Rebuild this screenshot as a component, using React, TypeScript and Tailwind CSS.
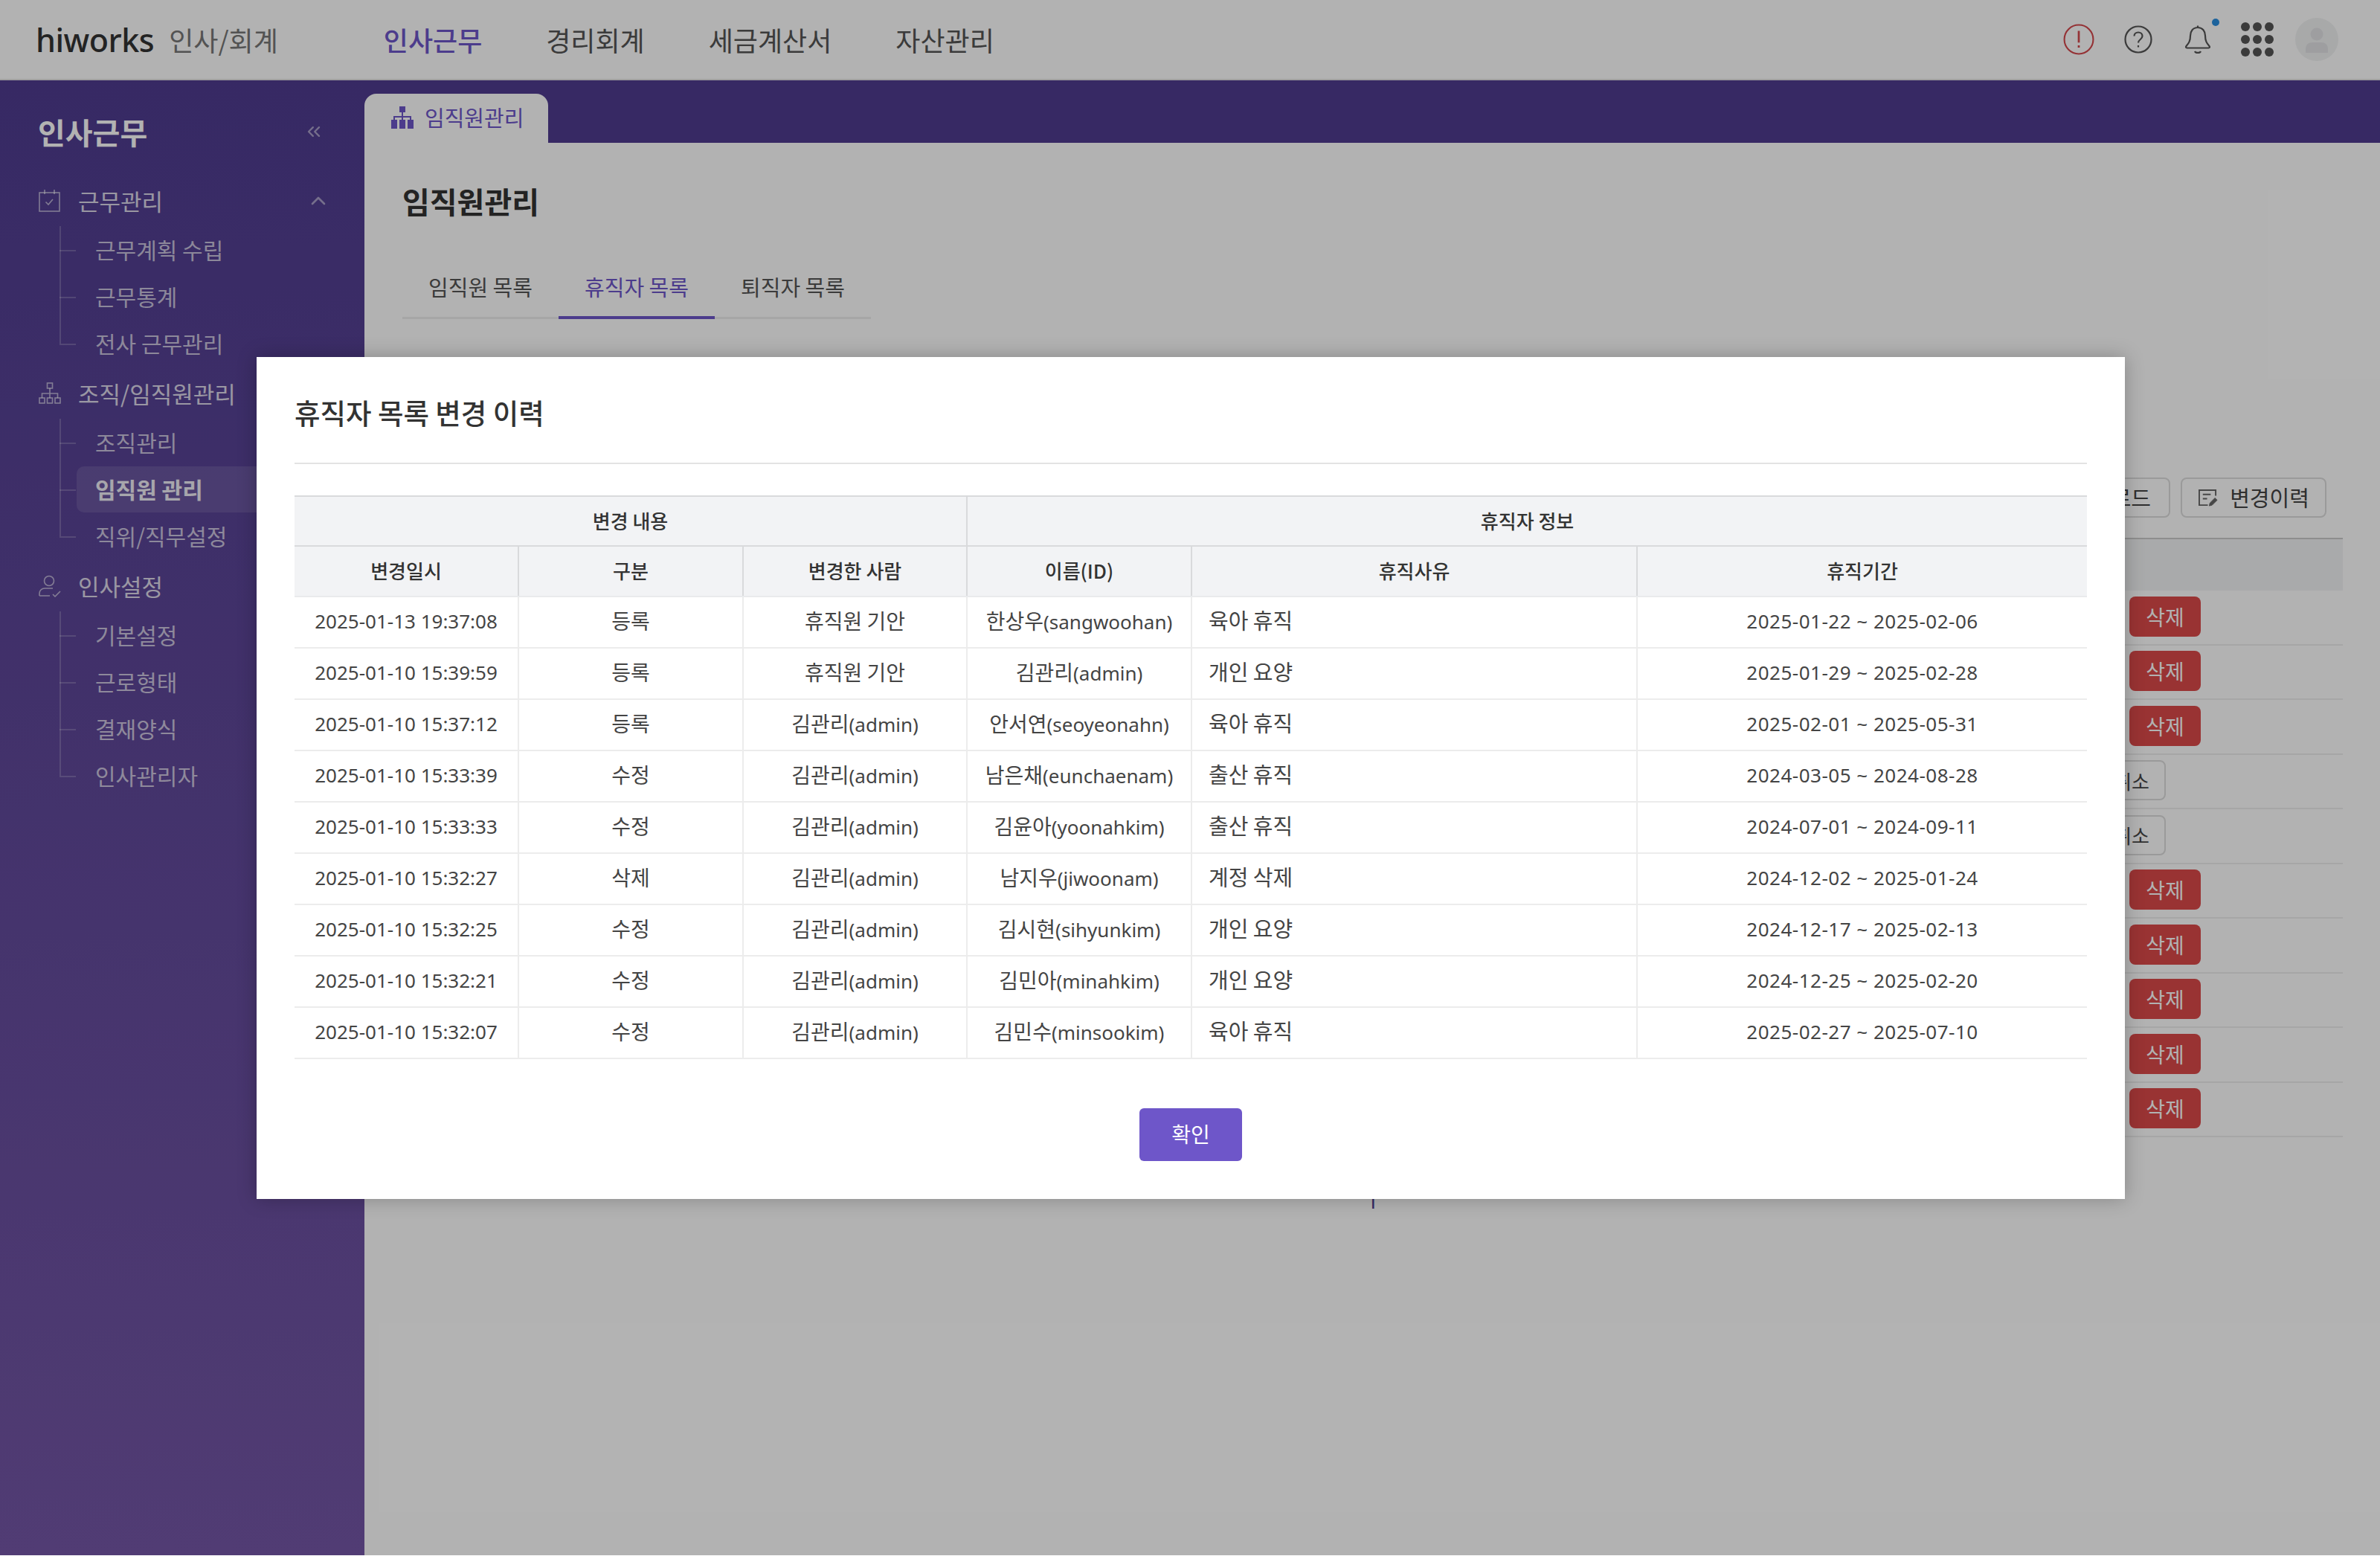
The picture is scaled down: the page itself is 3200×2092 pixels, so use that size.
import { ChevronUp, ChevronsLeft } from "lucide-react";

const kr = `font-['Noto_Sans_CJK_KR',sans-serif]`;

const menu = [
  { title: "근무관리", icon: "check", items: ["근무계획 수립", "근무통계", "전사 근무관리"], chevron: true },
  { title: "조직/임직원관리", icon: "org", items: ["조직관리", "임직원 관리", "직위/직무설정"] },
  { title: "인사설정", icon: "user", items: ["기본설정", "근로형태", "결재양식", "인사관리자"] },
];

const history = [
  ["2025-01-13 19:37:08", "등록", "휴직원 기안", "한상우", "(sangwoohan)", "육아 휴직", "2025-01-22 ~ 2025-02-06"],
  ["2025-01-10 15:39:59", "등록", "휴직원 기안", "김관리", "(admin)", "개인 요양", "2025-01-29 ~ 2025-02-28"],
  ["2025-01-10 15:37:12", "등록", "김관리", "안서연", "(seoyeonahn)", "육아 휴직", "2025-02-01 ~ 2025-05-31"],
  ["2025-01-10 15:33:39", "수정", "김관리", "남은채", "(eunchaenam)", "출산 휴직", "2024-03-05 ~ 2024-08-28"],
  ["2025-01-10 15:33:33", "수정", "김관리", "김윤아", "(yoonahkim)", "출산 휴직", "2024-07-01 ~ 2024-09-11"],
  ["2025-01-10 15:32:27", "삭제", "김관리", "남지우", "(jiwoonam)", "계정 삭제", "2024-12-02 ~ 2025-01-24"],
  ["2025-01-10 15:32:25", "수정", "김관리", "김시현", "(sihyunkim)", "개인 요양", "2024-12-17 ~ 2025-02-13"],
  ["2025-01-10 15:32:21", "수정", "김관리", "김민아", "(minahkim)", "개인 요양", "2024-12-25 ~ 2025-02-20"],
  ["2025-01-10 15:32:07", "수정", "김관리", "김민수", "(minsookim)", "육아 휴직", "2025-02-27 ~ 2025-07-10"],
];

const backRows = ["삭제", "삭제", "삭제", "취소", "취소", "삭제", "삭제", "삭제", "삭제", "삭제"];

function MenuIcon({ name }: { name: string }) {
  if (name === "check") {
    return (
      <svg viewBox="0 0 30 30" className="h-[30px] w-[30px]" fill="none" stroke="currentColor" strokeWidth="1.6">
        <rect x="1" y="4" width="27" height="25" />
        <path d="M8 0v6M21 0v6M9.5 16.5l3.5 3.5 6-7" />
      </svg>
    );
  }
  if (name === "org") {
    return (
      <svg viewBox="0 0 30 30" className="h-[30px] w-[30px]" fill="none" stroke="currentColor" strokeWidth="1.6">
        <rect x="11.5" y="1" width="7" height="7" />
        <rect x="1" y="21" width="7" height="7" />
        <rect x="11.5" y="21" width="7" height="7" />
        <rect x="22" y="21" width="7" height="7" />
        <path d="M15 8v13M4.5 21v-6h21v6" />
      </svg>
    );
  }
  return (
    <svg viewBox="0 0 30 30" className="h-[30px] w-[30px]" fill="none" stroke="currentColor" strokeWidth="1.6">
      <circle cx="14" cy="8" r="6.5" />
      <path d="M1 28v-3c0-4 3-7 7-7h11M1 28h14M19 26l3 3 7-7" />
    </svg>
  );
}

function Sidebar() {
  return (
    <aside className="flex w-[490px] shrink-0 flex-col bg-gradient-to-b from-[#4f3c90] to-[#7456a6] pt-[51px]">
      <div className="flex h-[36px] items-center justify-between pl-[51px] pr-[54px]">
        <span className={`${kr} text-[40px] font-bold text-white`}>인사근무</span>
        <ChevronsLeft className="h-[28px] w-[28px] text-white/50" strokeWidth={2} />
      </div>
      <div className="mt-[53px] flex flex-col gap-[14px]">
        {menu.map((group) => (
          <div key={group.title}>
            <div className="flex h-[44px] items-center gap-[23px] pl-[52px] pr-[46px] text-white/60">
              <MenuIcon name={group.icon} />
              <span className={`${kr} flex-1 text-[31px] text-white/80`}>{group.title}</span>
              {group.chevron && <ChevronUp className="h-[32px] w-[32px] text-white/50" strokeWidth={2} />}
            </div>
            <ul className="mt-[12px]">
              {group.items.map((item, i) => {
                const active = item === "임직원 관리";
                const last = i === group.items.length - 1;
                return (
                  <li key={item} className="relative flex h-[63px] items-center pl-[103px]">
                    <span className={`absolute left-[80px] top-0 w-[2px] bg-white/20 ${last ? "h-1/2" : "h-full"}`} />
                    <span className="absolute left-[80px] top-1/2 h-[2px] w-[22px] bg-white/20" />
                    <span
                      className={`${kr} flex h-[62px] flex-1 items-center rounded-l-[10px] pl-[25px] text-[30px] ${
                        active ? "bg-white/10 font-bold text-white/90" : "text-white/70"
                      }`}
                    >
                      {item}
                    </span>
                  </li>
                );
              })}
            </ul>
          </div>
        ))}
      </div>
    </aside>
  );
}

function TopBar() {
  return (
    <header className="flex h-[108px] shrink-0 items-center border-b-2 border-[#e6e6e6] bg-white pl-[48px] pr-[45px]">
      <span className="font-['Noto_Sans',sans-serif] text-[43px] font-medium leading-none tracking-[-0.5px] text-[#333]">hiworks</span>
      <span className={`${kr} ml-[20px] text-[36px] text-[#777]`}>인사/회계</span>
      <nav className={`${kr} ml-[142px] flex gap-[86px] text-[36px] text-[#555]`}>
        <span className="font-medium text-[#6e56c9]">인사근무</span>
        <span>경리회계</span>
        <span>세금계산서</span>
        <span>자산관리</span>
      </nav>
      <div className="ml-auto flex items-center text-[#555]">
        <div className="flex w-[80px] justify-center">
          <svg viewBox="0 0 40 40" className="h-[42px] w-[42px]" fill="none" stroke="#d5484d" strokeWidth="2">
            <circle cx="20" cy="20" r="18.5" />
            <path d="M20 9v15M20 27.5v3" strokeWidth="2.6" />
          </svg>
        </div>
        <div className="flex w-[80px] justify-center">
          <svg viewBox="0 0 40 40" className="h-[40px] w-[40px]" fill="none" stroke="currentColor" strokeWidth="2.2">
            <circle cx="20" cy="20" r="17.5" />
            <path d="M14.5 15.5c0-3 2.5-5 5.5-5s5.5 2 5.5 5c0 4.5-5.5 4.5-5.5 9M20 28v2.5" />
          </svg>
        </div>
        <div className="flex w-[80px] justify-center">
          <div className="relative h-[40px] w-[36px]">
            <svg viewBox="0 0 36 40" className="h-[40px] w-[36px]" fill="none" stroke="currentColor" strokeWidth="2.2">
              <path d="M18 1.5v2.5M18 4c-6.5 0-10 5-10 11 0 7-2 10-5.5 14-1 1.2-.5 2.5 1 2.5h29c1.5 0 2-1.3 1-2.5C30 25 28 22 28 15c0-6-3.5-11-10-11zM14 36c1 2.5 7 2.5 8 0" />
            </svg>
            <span className="absolute -right-[11px] -top-[8px] h-[10px] w-[10px] rounded-full bg-[#2a8ee0]" />
          </div>
        </div>
        <div className="flex w-[80px] justify-center">
          <div className="grid grid-cols-3 gap-x-[4px] gap-y-[5px]">
            {Array.from({ length: 9 }).map((_, i) => (
              <span key={i} className="h-[12px] w-[12px] rounded-full bg-[#555]" />
            ))}
          </div>
        </div>
        <div className="flex w-[80px] justify-center">
          <svg viewBox="0 0 58 58" className="h-[58px] w-[58px]">
            <circle cx="29" cy="29" r="29" fill="#f1f2f3" />
            <circle cx="29" cy="22" r="8.5" fill="#e2e3e5" />
            <path d="M14 47v-5c0-6 4-9 9-9h12c5 0 9 3 9 9v5z" fill="#e2e3e5" />
          </svg>
        </div>
      </div>
    </header>
  );
}

function BackgroundPage() {
  return (
    <main className="flex min-w-0 flex-1 flex-col">
      <div className="flex h-[84px] shrink-0 items-end bg-[#4f3c90]">
        <div className="flex h-[66px] w-[247px] items-center gap-[14px] rounded-t-[16px] bg-white pb-[2px] pl-[35px] text-[#6e56c9]">
          <svg viewBox="0 0 32 30" className="h-[30px] w-[32px]" fill="currentColor">
            <rect x="12" y="0" width="8" height="8" />
            <path d="M15 8h2v5h11v5h-2v-3H17v3h-2v-3H6v3H4v-5h11z" />
            <rect x="1" y="18" width="8" height="12" />
            <rect x="12" y="18" width="8" height="12" />
            <rect x="23" y="18" width="8" height="12" />
          </svg>
          <span className={`${kr} text-[29px]`}>임직원관리</span>
        </div>
      </div>
      <div className="flex flex-1 flex-col bg-white pl-[51px] pr-[50px]">
        <h1 className={`${kr} mt-[54px] h-[48px] text-[40px] font-bold leading-[48px] text-[#333]`}>임직원관리</h1>
        <div className="mt-[69px] flex h-[66px] w-[630px] border-b-[3px] border-[#eee]">
          {["임직원 목록", "휴직자 목록", "퇴직자 목록"].map((t, i) => (
            <div
              key={t}
              className={`${kr} -mb-[3px] flex w-[210px] items-center justify-center border-b-[4px] pb-[16px] text-[29px] ${
                i === 1 ? "border-[#6e56c9] text-[#6e56c9]" : "border-transparent text-[#555]"
              }`}
            >
              {t}
            </div>
          ))}
        </div>
        <div className={`${kr} mt-[213px] flex justify-end gap-[14px] pr-[22px] text-[29px] text-[#444]`}>
          <div className="flex h-[54px] items-center rounded-[8px] border-2 border-[#ddd] px-[24px]">다운로드</div>
          <div className="flex h-[54px] w-[196px] items-center justify-center gap-[16px] rounded-[8px] border-2 border-[#ddd]">
            <svg viewBox="0 0 28 26" className="h-[25px] w-[27px]" fill="none" stroke="#666" strokeWidth="2">
              <path d="M25 10V2H2v21h12M7 8h11M7 14h6" />
              <path d="M16 24l1-4 7-7 3 3-7 7z" fill="#666" strokeWidth="1" />
            </svg>
            변경이력
          </div>
        </div>
        <div className="mt-[27px] h-[71px] border-t-2 border-[#ccc] bg-[#f3f4f5]" />
        {backRows.map((b, i) => (
          <div
            key={i}
            className={`flex h-[73.5px] items-center justify-end border-b-2 border-[#eee] pb-[2px] ${
              b === "삭제" ? "pr-[191px]" : "pr-[238px]"
            }`}
          >
            {b === "삭제" ? (
              <span className={`${kr} flex h-[54px] w-[96px] items-center justify-center rounded-[8px] bg-[#db4949] text-[28px] text-white`}>삭제</span>
            ) : (
              <span className={`${kr} flex h-[54px] items-center justify-center rounded-[8px] border-2 border-[#ddd] px-[20px] text-[26px] text-[#444]`}>취소</span>
            )}
          </div>
        ))}
        <div className="mt-[66px] flex justify-center font-['Noto_Sans',sans-serif] text-[28px] leading-[38px] text-[#4f3c90]">1</div>
      </div>
    </main>
  );
}

function HistoryModal() {
  const cell = "border-2 border-[#ececec] px-0 text-center";
  const head = `${kr} border-2 border-[#d9dadc] bg-[#f2f3f5] text-center text-[26px] font-medium text-[#333]`;
  const num = "font-['Noto_Sans',sans-serif] text-[26px]";
  const ko = `${kr} text-[28px]`;
  return (
    <div className="flex h-[1132px] w-[2512px] flex-col bg-white px-[51px] shadow-[0_0_24px_rgba(0,0,0,0.25)]">
      <h2 className={`${kr} flex h-[144px] items-center border-b-2 border-[#e3e3e3] pt-[8px] text-[37.5px] font-medium text-[#333]`}>
        휴직자 목록 변경 이력
      </h2>
      <table className="mt-[42px] w-full table-fixed border-collapse text-[#444]">
        <colgroup>
          <col className="w-[301px]" />
          <col className="w-[302px]" />
          <col className="w-[301px]" />
          <col className="w-[302px]" />
          <col className="w-[599px]" />
          <col className="w-[605px]" />
        </colgroup>
        <thead>
          <tr className="h-[67px]">
            <th colSpan={3} className={`${head} border-x-0 pb-[2px]`}>변경 내용</th>
            <th colSpan={3} className={`${head} border-r-0 pb-[2px]`}>휴직자 정보</th>
          </tr>
          <tr className="h-[68px]">
            {["변경일시", "구분", "변경한 사람", "이름(ID)", "휴직사유", "휴직기간"].map((h, i) => (
              <th key={h} className={`${head} ${i === 0 ? "border-l-0" : ""} ${i === 5 ? "border-r-0" : ""} border-b-[#e9eaec] pb-[2px]`}>
                {h}
              </th>
            ))}
          </tr>
        </thead>
        <tbody>
          {history.map((r) => (
            <tr key={r[0]} className="h-[69px]">
              <td className={`${cell} ${num} border-l-0 pb-[2px]`}>{r[0]}</td>
              <td className={`${cell} ${ko} pb-[4px]`}>{r[1]}</td>
              <td className={`${cell} pb-[4px]`}>
                {r[2] === "김관리" ? (
                  <>
                    <span className={ko}>김관리</span>
                    <span className={num}>(admin)</span>
                  </>
                ) : (
                  <span className={ko}>{r[2]}</span>
                )}
              </td>
              <td className={`${cell} pb-[4px]`}>
                <span className={ko}>{r[3]}</span>
                <span className={num}>{r[4]}</span>
              </td>
              <td className={`${cell} ${kr} pb-[4px] pl-[22px] text-left text-[29px]`}>{r[5]}</td>
              <td className={`${cell} ${num} border-r-0 pb-[2px] tracking-[0.5px]`}>{r[6]}</td>
            </tr>
          ))}
        </tbody>
      </table>
      <div className="mt-[66px] flex justify-center">
        <button className={`${kr} h-[71px] w-[138px] rounded-[6px] bg-[#6e56c9] pb-[2px] text-[28px] text-white`}>확인</button>
      </div>
    </div>
  );
}

export default function App() {
  return (
    <div className="relative flex h-[2091px] w-[3200px] flex-col overflow-hidden bg-white">
      <TopBar />
      <div className="flex min-h-0 flex-1">
        <Sidebar />
        <BackgroundPage />
      </div>
      <div className="absolute inset-0 flex items-center justify-center bg-black/30 pl-[2px]">
        <HistoryModal />
      </div>
    </div>
  );
}
